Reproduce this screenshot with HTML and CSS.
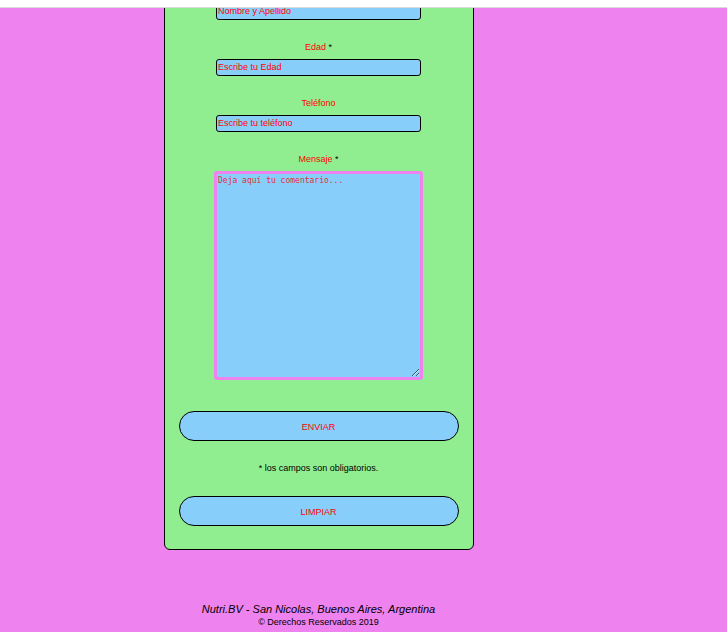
FILE: index.html
```html
<!DOCTYPE html>
<html lang="es">
<head>
<meta charset="utf-8">
<meta name="viewport" content="width=device-width, initial-scale=1">
<title>Nutri.BV</title>
<link rel="stylesheet" href="styles.css">
</head>
<body>
<div class="topbar"></div>
<div class="page">
  <main>
    <form class="card">
      <div class="field">
        <input id="nombre" type="text" aria-label="Nombre y Apellido" placeholder="Nombre y Apellido">
      </div>
      <div class="field">
        <label for="edad">Edad <span class="required">*</span></label>
        <input id="edad" type="text" placeholder="Escribe tu Edad">
      </div>
      <div class="field">
        <label for="telefono">Teléfono</label>
        <input id="telefono" type="text" placeholder="Escribe tu teléfono">
      </div>
      <div class="field">
        <label for="mensaje">Mensaje <span class="required">*</span></label>
        <textarea id="mensaje" placeholder="Deja aquí tu comentario..."></textarea>
      </div>
      <button class="send" type="submit">ENVIAR</button>
      <p class="note">* los campos son obligatorios.</p>
      <button type="reset">LIMPIAR</button>
    </form>
  </main>
  <footer>
    <address>Nutri.BV - San Nicolas, Buenos Aires, Argentina</address>
    <small>© Derechos Reservados 2019</small>
  </footer>
</div>
</body>
</html>
```
FILE: styles.css
```css
* {
  box-sizing: border-box;
}

body {
  margin: 0;
  height: 100vh;
  display: flex;
  flex-direction: column;
  font: 9px/14px "Liberation Sans", Arial, sans-serif;
  color: black;
}

.topbar {
  flex: none;
  height: 8px;
  background: white;
  border-bottom: 1px solid #d9d9d9;
}

/* Content is anchored to the end of the page */
.page {
  flex: 1;
  min-height: 0;
  overflow: hidden;
  display: flex;
  flex-direction: column;
  justify-content: flex-end;
  align-items: center;
  padding: 0 90px 4px 0;
  background: violet;
}

.card {
  display: flex;
  flex-direction: column;
  align-items: center;
  gap: 20px;
  padding: 24px 14px 23px;
  background: lightgreen;
  border: 1px solid black;
  border-radius: 6px;
}

.field {
  display: flex;
  flex-direction: column;
  align-items: center;
  gap: 5px;
}

label {
  color: red;
}

.required {
  color: black;
}

input,
textarea {
  background: lightskyblue;
  color: red;
}

input {
  width: 205px;
  height: 17px;
  padding: 0 1px 2px;
  border: 1px solid black;
  border-radius: 3px;
  font: 9px "Liberation Sans", Arial, sans-serif;
}

textarea {
  width: 209px;
  height: 209px;
  padding: 1px;
  border: 3px solid violet;
  border-radius: 3px;
  font: 8px/12px "DejaVu Sans Mono", monospace;
}

::placeholder {
  color: red;
  opacity: 1;
}

textarea::placeholder {
  opacity: 0.8;
}

button {
  width: 280px;
  height: 30px;
  padding: 2px 0 0;
  background: lightskyblue;
  border: 1px solid black;
  border-radius: 15px;
  color: red;
  font: 9px "Liberation Sans", Arial, sans-serif;
}

.send {
  margin-top: 11px;
}

.note {
  margin: 0;
  line-height: 15px;
}

footer {
  margin-top: 52px;
  display: flex;
  flex-direction: column;
  align-items: center;
}

address {
  font-size: 11px;
}

small {
  font-size: 9px;
  line-height: 12px;
}
```
